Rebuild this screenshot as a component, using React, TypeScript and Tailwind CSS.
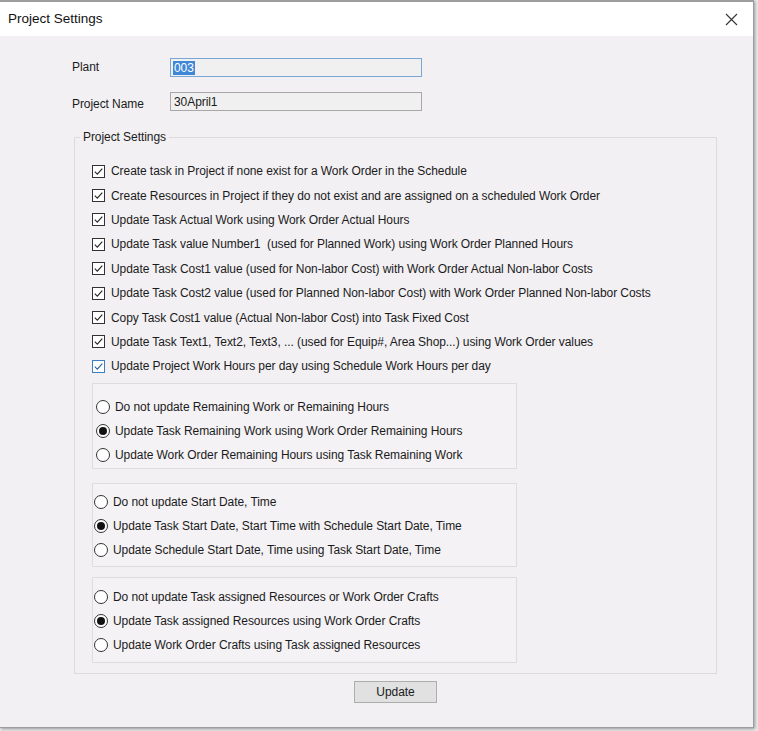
import React from "react";

const checks = [
  "Create task in Project if none exist for a Work Order in the Schedule",
  "Create Resources in Project if they do not exist and are assigned on a scheduled Work Order",
  "Update Task Actual Work using Work Order Actual Hours",
  "Update Task value Number1  (used for Planned Work) using Work Order Planned Hours",
  "Update Task Cost1 value (used for Non-labor Cost) with Work Order Actual Non-labor Costs",
  "Update Task Cost2 value (used for Planned Non-labor Cost) with Work Order Planned Non-labor Costs",
  "Copy Task Cost1 value (Actual Non-labor Cost) into Task Fixed Cost",
  "Update Task Text1, Text2, Text3, ... (used for Equip#, Area Shop...) using Work Order values",
  "Update Project Work Hours per day using Schedule Work Hours per day",
];

const groups = [
  {
    cls: "pt-[11px] pb-[1px] mt-0 pl-[3px]",
    items: [
      "Do not update Remaining Work or Remaining Hours",
      "Update Task Remaining Work using Work Order Remaining Hours",
      "Update Work Order Remaining Hours using Task Remaining Work",
    ],
    sel: 1,
  },
  {
    cls: "pt-[6px] pb-[4px] mt-[14px] pl-[1px]",
    items: [
      "Do not update Start Date, Time",
      "Update Task Start Date, Start Time with Schedule Start Date, Time",
      "Update Schedule Start Date, Time using Task Start Date, Time",
    ],
    sel: 1,
  },
  {
    cls: "pt-[7px] pb-[5px] mt-[10px] pl-[1px]",
    items: [
      "Do not update Task assigned Resources or Work Order Crafts",
      "Update Task assigned Resources using Work Order Crafts",
      "Update Work Order Crafts using Task assigned Resources",
    ],
    sel: 1,
  },
];

function CheckBox({ focus }: { focus?: boolean }) {
  return (
    <span
      className={
        "w-[13px] h-[13px] shrink-0 border bg-white flex items-center justify-center " +
        (focus ? "border-[#3d7fc4]" : "border-[#333333]")
      }
    >
      <svg width="11" height="11" viewBox="0 0 11 11">
        <path
          d="M1.8 5.6 L4.3 8.1 L9.3 2.6"
          fill="none"
          stroke={focus ? "#2d5f93" : "#222222"}
          strokeWidth="1.1"
        />
      </svg>
    </span>
  );
}

function Radio({ on }: { on?: boolean }) {
  return (
    <span className="w-[14px] h-[14px] shrink-0 rounded-full border border-[#333333] bg-white flex items-center justify-center">
      {on && <span className="w-[8px] h-[8px] rounded-full bg-[#111111]" />}
    </span>
  );
}

export default function App() {
  return (
    <div
      className="w-[758px] h-[731px] bg-[#e9e9ec] flex flex-col overflow-hidden text-[#1b1b1b] tracking-[-0.07px]"
      style={{ fontFamily: '"Liberation Sans", Arial, sans-serif' }}
    >
      <div className="w-[754px] h-[728px] flex flex-col border-t-2 border-r border-b border-[#9d9d9f] bg-[#f2f0f3] shadow-[1px_1px_3px_rgba(0,0,0,0.35)]">
        {/* title bar */}
        <div className="h-[34px] bg-white flex items-center justify-between pl-[8px] pr-[15px]">
          <span className="text-[13.5px] text-[#111] tracking-normal">Project Settings</span>
          <svg width="13" height="13" viewBox="0 0 13 13">
            <path d="M1 1 L12 12 M12 1 L1 12" stroke="#333" strokeWidth="1.1" />
          </svg>
        </div>

        {/* body */}
        <div className="flex-1 flex flex-col pl-[72px] pt-[22px] text-[12px]">
          <div className="flex items-center h-[19px]">
            <span className="w-[98px] -mt-[1px]">Plant</span>
            <div className="w-[252px] h-[19px] border border-[#7ba7d6] bg-[#f0f0f0] flex items-center px-[2px]">
              <span className="bg-[#3f88d8] text-white leading-[14px] px-[1px]">003</span>
            </div>
          </div>
          <div className="flex items-center h-[19px] mt-[15px]">
            <span className="w-[98px] pt-[4px]">Project Name</span>
            <div className="w-[252px] h-[19px] border border-[#a8a8a8] bg-[#f0f0f0] flex items-center px-[3px]">
              <span>30April1</span>
            </div>
          </div>

          <fieldset className="mt-[19px] ml-[2px] w-[643px] h-[544px] border border-[#dcdadd] p-0 flex flex-col">
            <legend className="ml-[5px] px-[3px] text-[12px] leading-[14px]">Project Settings</legend>
            <div className="flex flex-col pt-[15px] pl-[17px]">
              {checks.map((c, i) => (
                <div key={i} className="h-[24.4px] flex items-center gap-[6px]">
                  <CheckBox focus={i === checks.length - 1} />
                  <span className="whitespace-pre">{c}</span>
                </div>
              ))}
            </div>
            <div className="flex flex-col mt-[4px] pl-[17px]">
              {groups.map((g, gi) => (
                <div
                  key={gi}
                  className={"w-[425px] border border-[#dedcdf] bg-[#f4f2f5] flex flex-col " + g.cls}
                >
                  {g.items.map((t, i) => (
                    <div key={i} className="h-[24px] flex items-center gap-[5px]">
                      <Radio on={i === g.sel} />
                      <span>{t}</span>
                    </div>
                  ))}
                </div>
              ))}
            </div>
          </fieldset>

          <div className="flex pl-[282px] mt-[7px]">
            <button className="w-[83px] h-[22px] border border-[#adadad] bg-[#e1e1e1] text-[12px] flex items-center justify-center">
              Update
            </button>
          </div>
        </div>
      </div>
    </div>
  );
}
